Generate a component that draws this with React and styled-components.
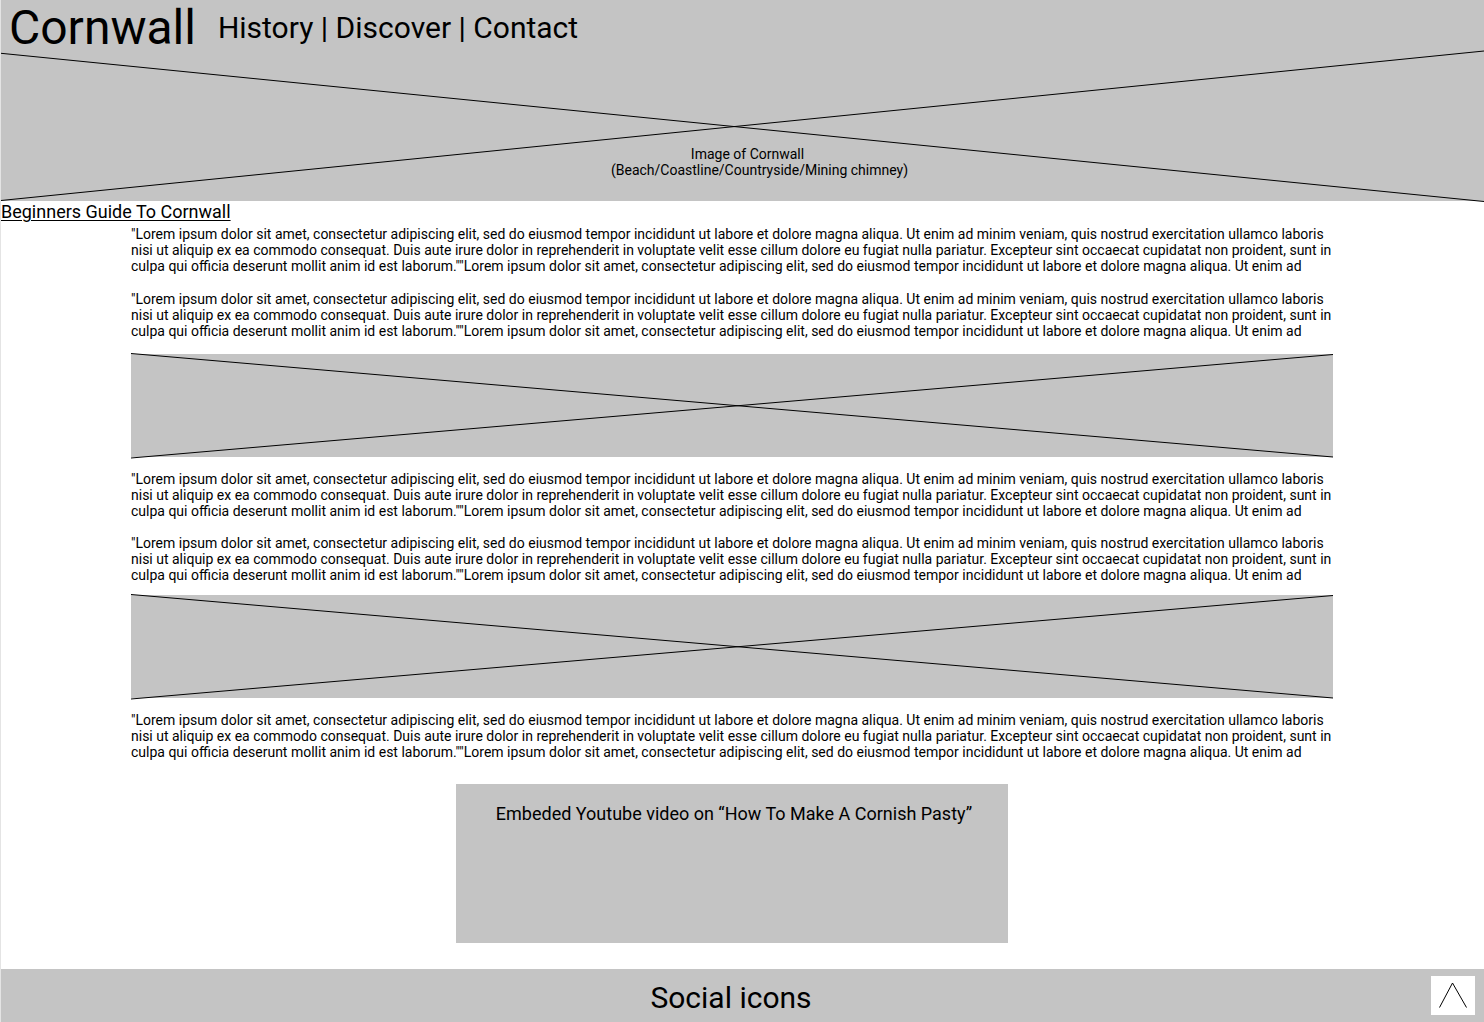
import React from "react";
import styled, { createGlobalStyle } from "styled-components";

const Global = createGlobalStyle`
  *, *::before, *::after { box-sizing: border-box; }
  body { margin: 0; background: #fff; color: #000; font: 14px/16px Roboto, sans-serif; }
  h1, h2, p, figure { margin: 0; font-weight: 400; }
`;

const Page = styled.div`
  min-height: 100vh;
  display: flex;
  flex-direction: column;
  border-left: 1px solid #e4e4e4;
`;

const Header = styled.header`
  background: #c4c4c4;
`;

const TopBar = styled.div`
  display: flex;
  gap: 22px;
  height: 52px;
  padding-left: 8px;
`;

const Brand = styled.h1`
  font-size: 48px;
  line-height: 56px;
`;

const Nav = styled.nav`
  font-size: 30px;
  line-height: 56px;
`;

const NavLink = styled.a`
  color: inherit;
  text-decoration: none;
`;

const Picture = styled.figure`
  display: grid;
  height: ${(p) => p.$height}px;
  background: #c4c4c4;

  > * { grid-area: 1 / 1; }
`;

const Cross = styled.svg`
  display: block;
  width: 100%;
  height: ${(p) => p.$height}px;
  overflow: visible;
`;

const Caption = styled.figcaption`
  justify-self: center;
  padding: 94px 0 0 34px;
  text-align: center;
`;

const CaptionTitle = styled.span`
  display: block;
  padding-right: 24px;
`;

const PageTitle = styled.h2`
  font-size: 18px;
  line-height: 21px;
  text-decoration: underline;
  text-decoration-thickness: 1px;
  text-underline-offset: 2px;
`;

const Main = styled.main`
  flex: 1;
`;

const Article = styled.article`
  display: flex;
  flex-direction: column;
  margin: 4px 151px 26px 130px;
`;

const Copy = styled.div`
  display: flex;
  flex-direction: column;
  gap: ${(p) => p.$gap}px;
  padding-bottom: ${(p) => p.$after}px;

  figure + & { padding-top: 14px; }
`;

const Video = styled.section`
  align-self: center;
  width: 552px;
  height: 159px;
  padding: 19px 0 0 4px;
  background: #c4c4c4;
  text-align: center;
  font-size: 18px;
  line-height: 21px;
`;

const Footer = styled.footer`
  display: grid;
  grid-template-columns: 1fr auto 1fr;
  align-items: start;
  padding: 7px 9px 2px 0;
  background: #c4c4c4;
`;

const Social = styled.p`
  grid-column: 2;
  padding-right: 14px;
  font-size: 30px;
  line-height: 44px;
`;

const TopButton = styled.button`
  justify-self: end;
  width: 44px;
  height: 39px;
  padding: 0;
  border: 0;
  background: #fff;

  svg { display: block; }
`;

const LOREM =
  '"Lorem ipsum dolor sit amet, consectetur adipiscing elit, sed do eiusmod tempor incididunt ut labore et dolore magna aliqua. Ut enim ad minim veniam, quis nostrud exercitation ullamco laboris nisi ut aliquip ex ea commodo consequat. Duis aute irure dolor in reprehenderit in voluptate velit esse cillum dolore eu fugiat nulla pariatur. Excepteur sint occaecat cupidatat non proident, sunt in culpa qui officia deserunt mollit anim id est laborum.""Lorem ipsum dolor sit amet, consectetur adipiscing elit, sed do eiusmod tempor incididunt ut labore et dolore magna aliqua. Ut enim ad';

function Placeholder({ height, lines, viewBox, children }) {
  return (
    <Picture $height={height}>
      <Cross $height={height} viewBox={viewBox} preserveAspectRatio="none" aria-hidden="true">
        <path d={lines} fill="none" stroke="#000" vectorEffect="non-scaling-stroke" />
      </Cross>
      {children}
    </Picture>
  );
}

function Banner() {
  return <Placeholder height={103} viewBox="0 0 1202 103" lines="M0 -.5L1202 103M0 104L1202 .5" />;
}

export default function App() {
  return (
    <>
      <Global />
      <Page id="top">
        <Header>
          <TopBar>
            <Brand>Cornwall</Brand>
            <Nav aria-label="Main">
              <NavLink href="#history">History</NavLink>
              {" | "}
              <NavLink href="#discover">Discover</NavLink>
              {" | "}
              <NavLink href="#contact">Contact</NavLink>
            </Nav>
          </TopBar>
          <Placeholder height={149} viewBox="0 0 1483 149" lines="M0 1.300L1483 149.500M0 148.500L1483 -1">
            <Caption>
              <CaptionTitle>Image of Cornwall</CaptionTitle>
              (Beach/Coastline/Countryside/Mining chimney)
            </Caption>
          </Placeholder>
        </Header>
        <Main>
          <PageTitle>Beginners Guide To Cornwall</PageTitle>
          <Article>
            <Copy $gap={17} $after={15}>
              <p>{LOREM}</p>
              <p>{LOREM}</p>
            </Copy>
            <Banner />
            <Copy $gap={16} $after={12}>
              <p>{LOREM}</p>
              <p>{LOREM}</p>
            </Copy>
            <Banner />
            <Copy $gap={16} $after={24}>
              <p>{LOREM}</p>
            </Copy>
            <Video>Embeded Youtube video on “How To Make A Cornish Pasty”</Video>
          </Article>
        </Main>
        <Footer>
          <Social>Social icons</Social>
          <TopButton type="button" aria-label="Back to top" onClick={() => window.scrollTo(0, 0)}>
            <svg width="44" height="39" viewBox="0 0 44 39">
              <path d="M8.500 31.500L21.500 7L35.500 31.500" fill="none" stroke="#000" />
            </svg>
          </TopButton>
        </Footer>
      </Page>
    </>
  );
}
